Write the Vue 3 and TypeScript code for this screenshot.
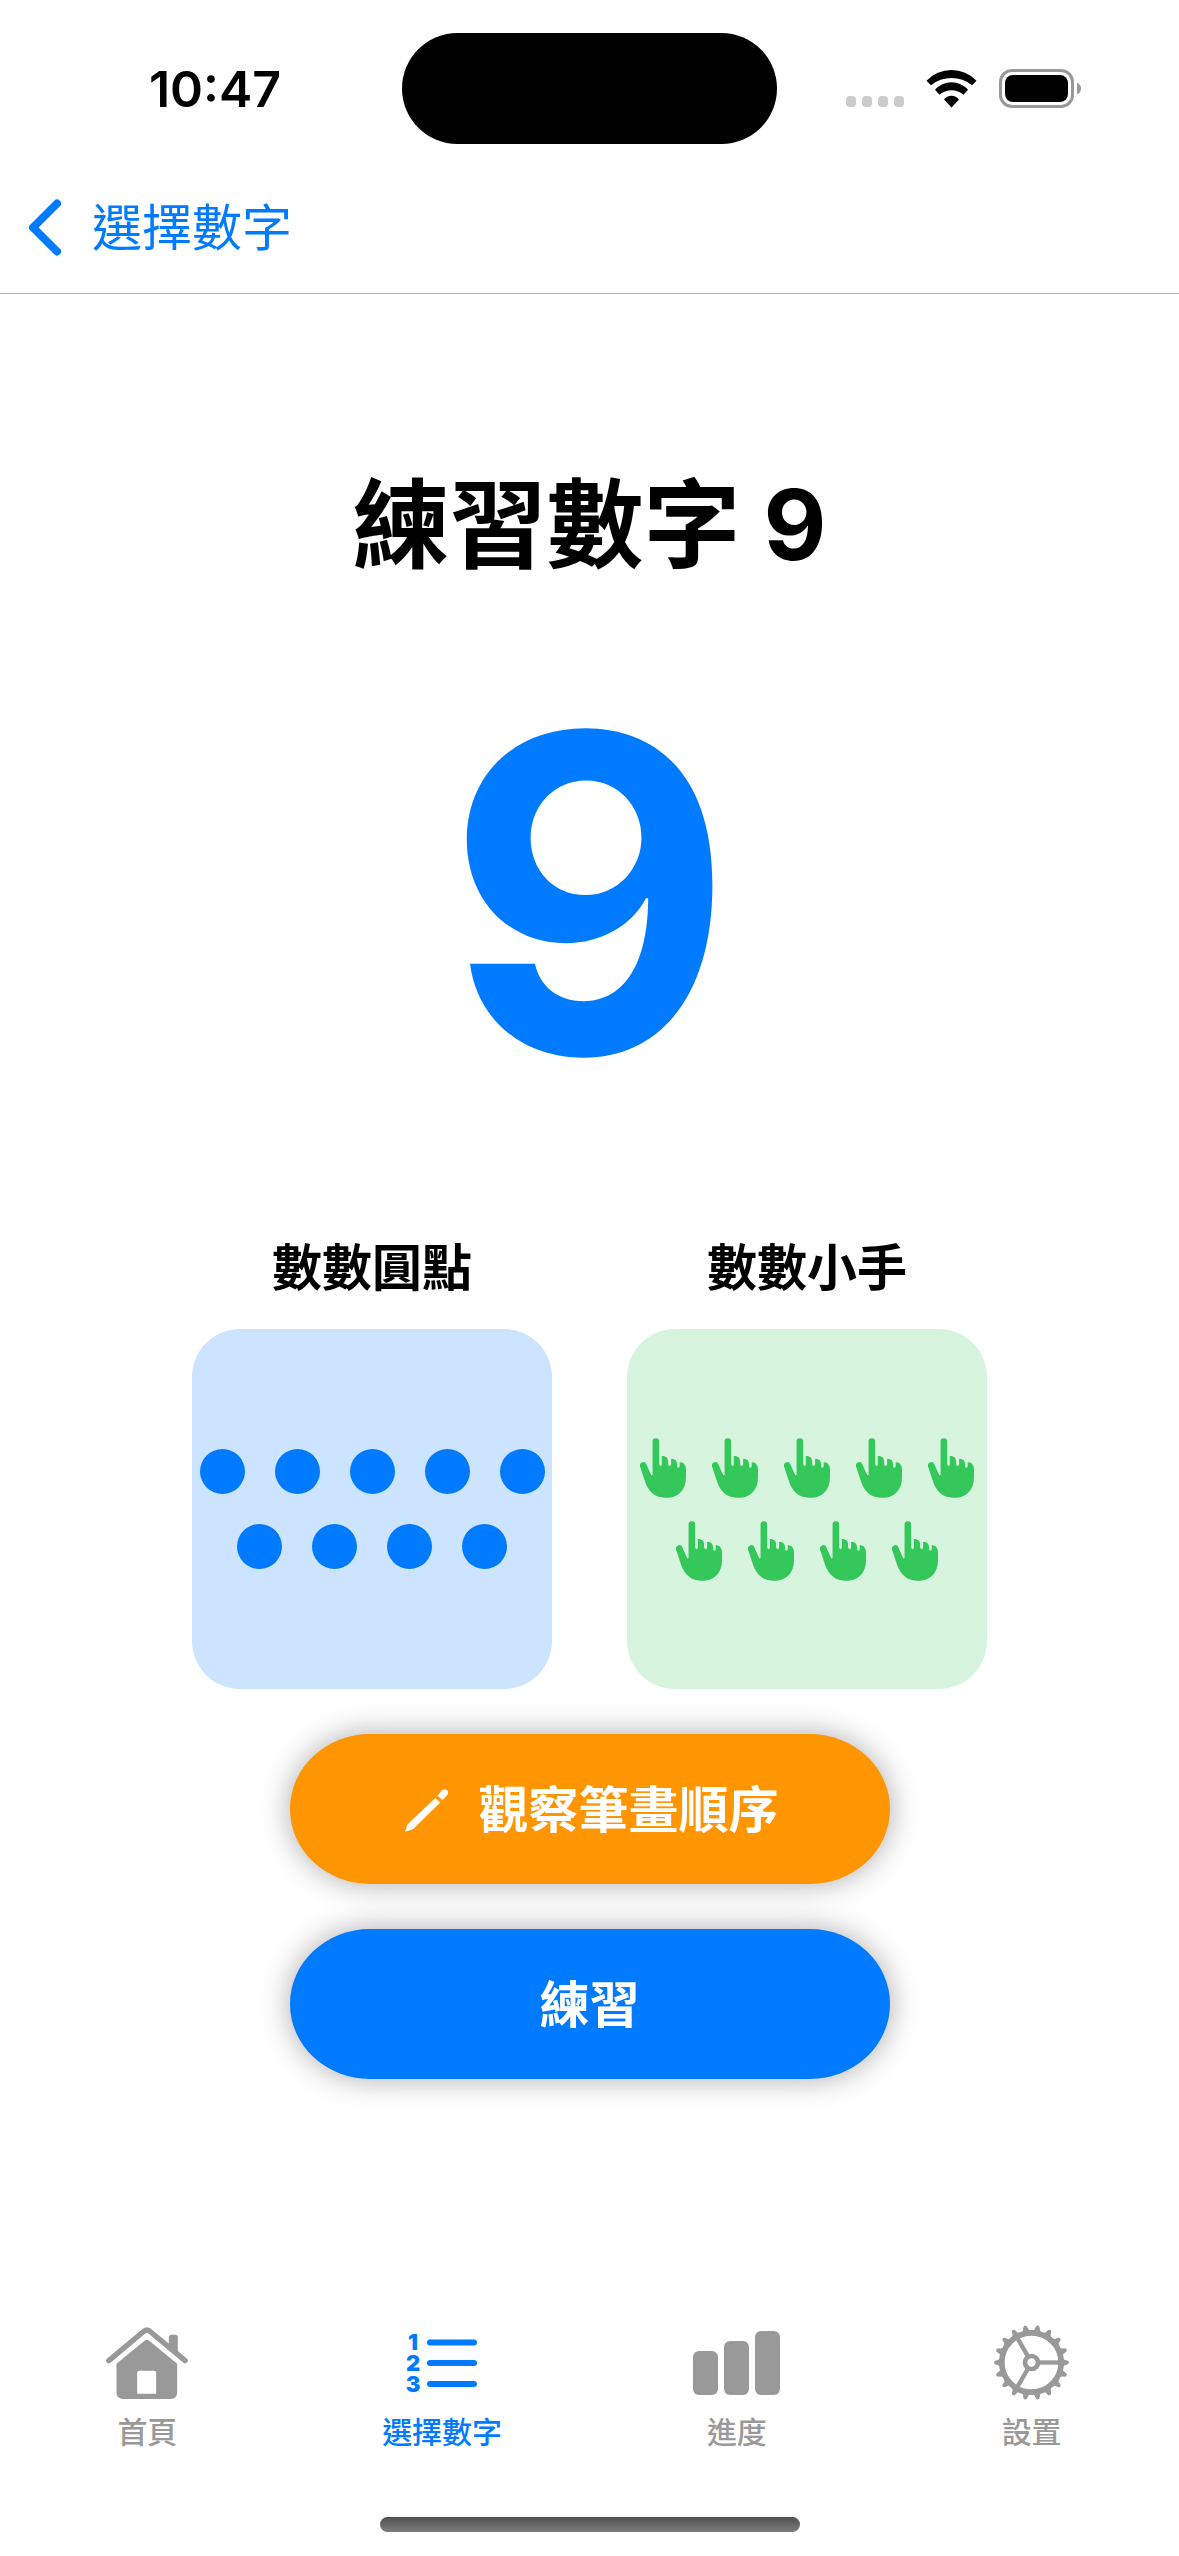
<script setup lang="ts">
interface Tab {
  id: 'home' | 'numbers' | 'progress' | 'settings'
  label: string
}

const digit = 9
const perRow = 5

const rows: number[] = []
for (let left = digit; left > 0; left -= perRow) {
  rows.push(Math.min(left, perRow))
}

const activeTab: Tab['id'] = 'numbers'
const tabs: Tab[] = [
  { id: 'home', label: '首頁' },
  { id: 'numbers', label: '選擇數字' },
  { id: 'progress', label: '進度' },
  { id: 'settings', label: '設置' },
]

const teeth = Array.from({ length: 18 }, (_, i) => i * 20)
const spokes = [0, 120, 240]
</script>

<template>
  <div class="screen" lang="zh-Hant">
    <header>
      <div class="status">
        <time class="clock">10:47</time>
        <div class="island"></div>
        <div class="indicators">
          <div class="signal"><i v-for="n in 4" :key="n"></i></div>
          <svg class="wifi" width="51" height="38" viewBox="0 0 51 38" aria-hidden="true">
            <path d="M.5 10.7A34.6 34.6 0 0 1 50.5 10.7L46 15.3A32.4 32.4 0 0 0 5 15.3Z" />
            <path d="M9 19.7A22 22 0 0 1 42 19.7L37.5 24.8A18.2 18.2 0 0 0 13.5 24.8Z" />
            <path d="M18 29.5A9.3 9.3 0 0 1 33 29.5L25.5 37.5Z" />
          </svg>
          <svg width="83" height="39" viewBox="0 0 83 39" aria-hidden="true">
            <rect x="1.5" y="1.5" width="72" height="36" rx="11.5" fill="none" stroke="#999" stroke-width="3" />
            <rect x="6" y="6" width="63" height="27" rx="8" />
            <path d="M78 13.5Q82 15.5 82 19.5T78 25.5Z" fill="#999" />
          </svg>
        </div>
      </div>
      <nav class="navbar">
        <a class="back" href="#numbers">
          <svg width="33" height="57" viewBox="0 0 33 57" aria-hidden="true">
            <path d="M29 4.5L5 28.5L29 52.5" fill="none" stroke="currentColor" stroke-width="8" stroke-linecap="round" stroke-linejoin="round" />
          </svg>
          <span>選擇數字</span>
        </a>
      </nav>
    </header>

    <main>
      <h1>練習數字 {{ digit }}</h1>
      <div class="digit">{{ digit }}</div>

      <div class="cards">
        <section>
          <h2>數數圓點</h2>
          <div class="card dots">
            <div v-for="(count, r) in rows" :key="r" class="row">
              <span v-for="n in count" :key="n" class="dot"></span>
            </div>
          </div>
        </section>
        <section>
          <h2>數數小手</h2>
          <div class="card hands">
            <div v-for="(count, r) in rows" :key="r" class="row">
              <svg v-for="n in count" :key="n" width="46" height="60" viewBox="0 0 139 180" aria-hidden="true">
                <path d="M38 10A10 10 0 0 1 58 10V79Q58 84 62 84Q66 84 66 79V54C78 53 85 60 85 71V79Q85 84 89.500 84Q94 84 94 79V63C104 62 112 68 112 78V84Q112 89 116 89Q120 89 120 84V73C132 72 139 82 139 96V118C139 158 114 180 80 180C46 180 26 163 15 131L1 88A10 10 0 0 1 19 78L32 108Q33 112 36 112Q38 112 38 108Z" fill="currentColor" />
              </svg>
            </div>
          </div>
        </section>
      </div>

      <div class="actions">
        <button type="button" class="action watch">
          <svg width="44" height="44" viewBox="0 0 44 44" aria-hidden="true">
            <path d="M.4 42.400L2 37.800Q2.400 36.600 3.400 35.600L30.300 10L35.300 14.500L9 40.200Q8.200 41 7 41.500L1.400 43.500Q0 43.700.4 42.400Z" fill="currentColor" />
            <path d="M32.500 7.800L37 2.300Q39.600 0 42 2.300Q44.200 4.800 42 7.400L37.500 12Z" fill="currentColor" />
          </svg>
          <span>觀察筆畫順序</span>
        </button>
        <button type="button" class="action practice">練習</button>
      </div>
    </main>

    <footer>
      <nav class="tabs">
        <a
          v-for="tab in tabs"
          :key="tab.id"
          :href="'#' + tab.id"
          class="tab"
          :class="{ active: tab.id === activeTab }"
        >
          <span class="tab-icon">
            <svg v-if="tab.id === 'home'" width="82" height="72" viewBox="0 0 245 216" aria-hidden="true">
              <path d="M8 101L114 12Q122 6 130 12L237 101" fill="none" stroke="currentColor" stroke-width="16" stroke-linecap="round" stroke-linejoin="round" />
              <path d="M188 58V31Q188 23 196 23H207Q215 23 215 31V80Z" fill="currentColor" />
              <path fill-rule="evenodd" d="M31 110L115 41Q122 36 129 41L213 110V196Q213 216 193 216H51Q31 216 31 196ZM93 200H150V138Q150 131 143 131H100Q93 131 93 138Z" fill="currentColor" />
            </svg>
            <svg v-else-if="tab.id === 'numbers'" width="78" height="74" viewBox="-4 0 78 74" aria-hidden="true">
              <g class="list-digits" text-anchor="middle">
                <text x="6" y="24">1</text>
                <text x="6" y="45">2</text>
                <text x="6" y="66">3</text>
              </g>
              <path d="M23 16.500H67M23 37H67M23 58H67" stroke="currentColor" stroke-width="6" stroke-linecap="round" />
            </svg>
            <svg v-else-if="tab.id === 'progress'" width="87" height="64" viewBox="0 0 87 64" aria-hidden="true">
              <g fill="currentColor">
                <rect x="0" y="20" width="25" height="44" rx="6" />
                <rect x="31" y="10" width="25" height="54" rx="6" />
                <rect x="62" y="0" width="25" height="64" rx="6" />
              </g>
            </svg>
            <svg v-else width="75" height="75" viewBox="-112.500 -112.500 225 225" aria-hidden="true">
              <g fill="none" stroke="currentColor">
                <circle r="89" stroke-width="17" />
                <circle r="19.500" stroke-width="14" />
                <path v-for="a in spokes" :key="a" d="M22 0H88" stroke-width="13" :transform="`rotate(${a})`" />
              </g>
              <path v-for="a in teeth" :key="a" d="M92 -15Q98 -7 107 -6Q112.500 -5 112.500 0T107 6Q98 7 92 15Z" fill="currentColor" :transform="`rotate(${a})`" />
            </svg>
          </span>
          <span>{{ tab.label }}</span>
        </a>
      </nav>
      <div class="home-indicator"></div>
    </footer>
  </div>
</template>

<style>
body {
  background: #fff;
}
</style>

<style scoped>
.screen {
  display: flex;
  flex-direction: column;
  min-height: 100vh;
  color: #000;
  background: #fff;
  font-family: Inter, "Noto Sans CJK TC", sans-serif;
}

svg {
  display: block;
  flex: none;
}

.status {
  display: grid;
  grid-template-columns: 1fr 375px 1fr;
  align-items: center;
  height: 177px;
}

.clock {
  padding-left: 28px;
  font-size: 50px;
  line-height: 60px;
  font-weight: 600;
  text-align: center;
}

.island {
  height: 111px;
  border-radius: 56px;
  background: #000;
}

.indicators {
  display: flex;
  align-items: center;
  justify-content: flex-end;
  gap: 22px;
  padding-right: 97px;
}

.signal {
  display: flex;
  gap: 6px;
  padding-top: 25px;
}

.signal i {
  width: 10px;
  height: 11px;
  border-radius: 4px;
  background: #ccc;
}

.navbar {
  display: flex;
  align-items: center;
  height: 116px;
  padding: 0 28px;
  border-bottom: 1px solid #b2b2b2;
}

.back {
  display: flex;
  align-items: center;
  gap: 31px;
  margin-bottom: 15px;
  color: #007aff;
  font-size: 50px;
  line-height: 72px;
  text-decoration: none;
}

main {
  display: flex;
  flex-direction: column;
  align-items: center;
  padding-top: 171px;
}

h1 {
  margin: 0;
  font-size: 97px;
  line-height: 120px;
  font-weight: 700;
}

.digit {
  margin-top: 58px;
  color: #007aff;
  font-size: 440px;
  line-height: 500px;
  font-weight: 700;
}

.cards {
  display: flex;
  gap: 75px;
  margin-top: 88px;
}

h2 {
  margin: 0 0 24px;
  font-size: 50px;
  line-height: 74px;
  font-weight: 600;
  text-align: center;
}

.card {
  display: flex;
  flex-direction: column;
  align-items: center;
  justify-content: center;
  width: 360px;
  height: 360px;
  border-radius: 48px;
}

.row {
  display: flex;
}

.dots {
  gap: 30px;
  background: #cce4ff;
}

.dots .row {
  gap: 30px;
}

.dot {
  width: 45px;
  height: 45px;
  border-radius: 50%;
  background: #007aff;
}

.hands {
  gap: 23px;
  color: #34c759;
  background: #d6f4de;
}

.hands .row {
  gap: 26px;
}

.actions {
  display: flex;
  flex-direction: column;
  gap: 45px;
  margin-top: 45px;
}

.action {
  display: flex;
  align-items: center;
  justify-content: center;
  gap: 30px;
  width: 600px;
  height: 150px;
  padding: 2px 0 0;
  border: 0;
  border-radius: 80px / 75px;
  box-shadow: 0 0 30px rgba(0, 0, 0, 0.33);
  color: #fff;
  font: inherit;
  font-size: 50px;
  line-height: 72px;
  font-weight: 600;
}

.watch {
  padding-left: 4px;
  background: #ff9500;
}

.practice {
  background: #007aff;
}

footer {
  display: flex;
  flex-direction: column;
  align-items: center;
  gap: 67px;
  margin-top: auto;
  padding-bottom: 24px;
}

.tabs {
  display: flex;
  width: 100%;
}

.tab {
  flex: 1;
  display: flex;
  flex-direction: column;
  align-items: center;
  gap: 14px;
  color: #999;
  font-size: 30px;
  line-height: 36px;
  font-weight: 500;
  text-decoration: none;
}

.tab.active {
  color: #007aff;
}

.tab-icon {
  display: flex;
  align-items: center;
  height: 75px;
}

.list-digits {
  fill: currentColor;
  font-size: 22px;
  font-weight: 900;
}

.home-indicator {
  width: 420px;
  height: 15px;
  border-radius: 8px;
  background: linear-gradient(#505050, #7c7c7c);
}
</style>
